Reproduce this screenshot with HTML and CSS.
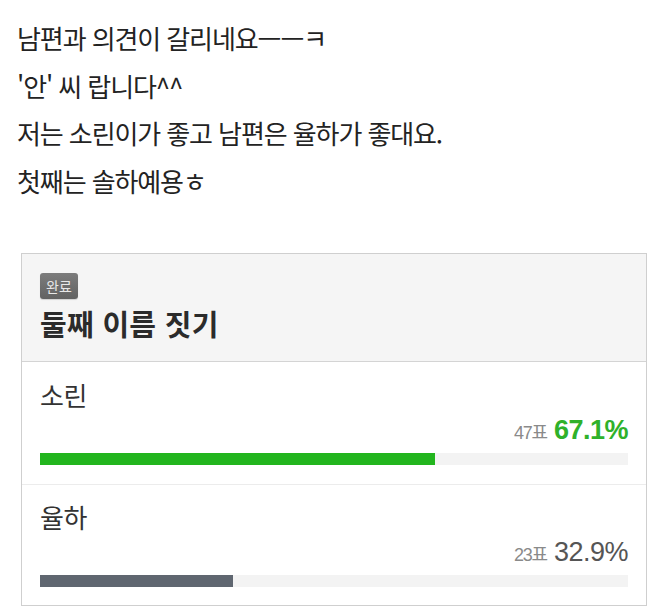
FILE: index.html
```html
<!DOCTYPE html>
<html lang="ko">
<head>
<meta charset="utf-8">
<title>둘째 이름 짓기</title>
<link rel="stylesheet" href="styles.css">
</head>
<body>
<div class="post">
  <p class="line">남편과 의견이 갈리네요ㅡㅡㅋ</p>
  <p class="line">'안' 씨 랍니다^^</p>
  <p class="line">저는 소린이가 좋고 남편은 율하가 좋대요.</p>
  <p class="line">첫째는 솔하예용ㅎ</p>
</div>
<section class="poll">
  <header class="poll-head">
    <span class="badge">완료</span>
    <h1 class="poll-title">둘째 이름 짓기</h1>
  </header>
  <div class="option">
    <div class="opt-label">소린</div>
    <div class="opt-stat"><span class="votes">47표</span><span class="pct pct-win">67.1%</span></div>
    <div class="track"><div class="fill fill-win" style="width:67.1%"></div></div>
  </div>
  <div class="option">
    <div class="opt-label">율하</div>
    <div class="opt-stat"><span class="votes">23표</span><span class="pct">32.9%</span></div>
    <div class="track"><div class="fill" style="width:32.9%"></div></div>
  </div>
</section>
</body>
</html>
```
FILE: styles.css
```css
html, body {
  margin: 0;
  padding: 0;
  background: #ffffff;
}
body {
  font-family: "Noto Sans CJK KR", "Noto Sans", sans-serif;
  color: #232323;
  width: 659px;
  height: 616px;
  overflow: hidden;
}
.post {
  padding: 14px 0 0 17px;
}
.line {
  margin: 0;
  font-size: 26px;
  line-height: 47.5px;
  letter-spacing: -1.1px;
  white-space: nowrap;
}
.poll {
  margin: 49px 0 0 21px;
  width: 624px;
  border: 1px solid #cfcfcf;
}
.poll-head {
  background: #f5f5f5;
  border-bottom: 1px solid #d4d4d4;
  padding: 19px 18px 20px;
  display: flex;
  flex-direction: column;
  align-items: flex-start;
}
.badge {
  display: inline-block;
  background: linear-gradient(#7c7c7c, #626262);
  color: #e8e8e8;
  font-size: 14px;
  line-height: 26px;
  padding: 0 6px;
  border-radius: 3px;
  box-shadow: 0 1px 1px rgba(0,0,0,0.15);
}
.poll-title {
  margin: 6px 0 0;
  font-size: 29px;
  font-weight: 700;
  line-height: 36px;
  color: #2b2b2b;
  letter-spacing: 0.3px;
}
.option {
  padding: 17px 18px 19px;
  display: flex;
  flex-direction: column;
}
.option + .option {
  border-top: 1px solid #ececec;
  padding-top: 16px;
  padding-bottom: 18px;
}
.opt-label {
  font-size: 26px;
  line-height: 32px;
  color: #333;
  letter-spacing: -0.5px;
}
.opt-stat {
  margin-top: 5px;
  display: flex;
  justify-content: flex-end;
  align-items: baseline;
  gap: 7px;
  line-height: 28px;
  font-family: "Liberation Sans", "Noto Sans CJK KR", sans-serif;
}
.votes {
  font-size: 18px;
  color: #8a8a8a;
  letter-spacing: -1.2px;
}
.pct {
  font-size: 27px;
  color: #555;
  letter-spacing: -0.5px;
}
.pct-win {
  color: #2fb12a;
  font-weight: 700;
}
.track {
  margin-top: 6px;
  height: 12px;
  background: #f3f3f3;
}
.fill {
  height: 100%;
  background: #5f6670;
}
.fill-win {
  background: #22b51e;
}
```
